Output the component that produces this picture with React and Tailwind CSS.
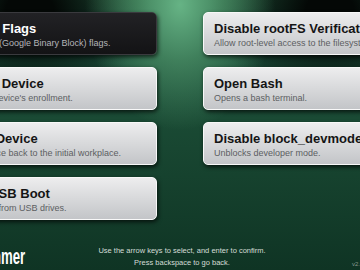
import React from "react";

const left = [
  {
    title: "Set GBB Flags",
    desc: "Sets GBB (Google Binary Block) flags.",
    active: true,
    t: "ml-[23px]",
    d: "ml-[34px]",
  },
  { title: "Deprovision Device", desc: "Removes the device's enrollment.", t: "ml-0", d: "ml-[15px]" },
  {
    title: "Reprovision Device",
    desc: "Brings the device back to the initial workplace.",
    t: "-ml-[6px]",
    d: "ml-[14px]",
  },
  { title: "Enable USB Boot", desc: "Allows booting from USB drives.", t: "ml-[20px]", d: "ml-[15px]" },
];

const right = [
  { title: "Disable rootFS Verification", desc: "Allow root-level access to the filesystem.", t: "ml-0", d: "ml-0" },
  { title: "Open Bash", desc: "Opens a bash terminal.", t: "ml-0", d: "ml-0" },
  { title: "Disable block_devmode", desc: "Unblocks developer mode.", t: "ml-0", d: "ml-0" },
];

function Card({ item }) {
  const base =
    "h-[43px] w-[245px] shrink-0 rounded-[5px] px-[10px] pt-[7px] overflow-hidden whitespace-nowrap shadow-[1px_2px_4px_rgba(0,0,0,0.7)]";
  if (item.active) {
    return (
      <div className={base + " bg-gradient-to-b from-[#222225] to-[#131315] border border-[#3a3a3e]"}>
        <div className={item.t + " text-[13px] font-bold leading-[17px] text-white"}>{item.title}</div>
        <div className={item.d + " text-[9px] leading-[12px] text-[#b4b4b8]"}>{item.desc}</div>
      </div>
    );
  }
  return (
    <div className={base + " bg-gradient-to-b from-[#ededee] to-[#c3c5c8] border border-[#f8f8f8]"}>
      <div className={item.t + " text-[13px] font-bold leading-[17px] text-[#151515]"}>{item.title}</div>
      <div className={item.d + " text-[9px] leading-[12px] text-[#5c5e62]"}>{item.desc}</div>
    </div>
  );
}

export default function App() {
  return (
    <div
      className="relative flex h-[270px] w-[360px] flex-col overflow-hidden bg-[radial-gradient(ellipse_95px_125px_at_180px_5px,#66b385_0%,rgba(84,156,110,0.65)_45%,transparent_100%),radial-gradient(ellipse_120px_90px_at_30px_10px,rgba(4,8,6,1)_20%,transparent),radial-gradient(ellipse_120px_90px_at_330px_10px,rgba(4,8,6,1)_20%,transparent),linear-gradient(to_bottom,#23593f,#18493a_10%,#1a4a34_45%,#0f3424)]"
      style={{ fontFamily: '"Liberation Sans", Arial, sans-serif' }}
    >
      <div className="flex justify-center gap-[46px] pt-[12px]">
        <div className="flex flex-col gap-[12px]">
          {left.map((item) => (
            <Card key={item.title} item={item} />
          ))}
        </div>
        <div className="flex flex-col gap-[12px]">
          {right.map((item) => (
            <Card key={item.title} item={item} />
          ))}
        </div>
      </div>

      <div className="mt-auto flex w-[536px] shrink-0 items-end self-center pb-[1px]">
        <div className="w-[150px] pl-[53px]">
          <div className="origin-left scale-x-[0.6] text-[22px] font-bold leading-[24px] text-white">Sh1mmer</div>
        </div>
        <div className="flex-1 pl-[4px] text-center text-[7.5px] leading-[12px] text-[#d4ddd7]">
          <div>Use the arrow keys to select, and enter to confirm.</div>
          <div>Press backspace to go back.</div>
        </div>
        <div className="w-[150px] pl-[54px] text-[6px] leading-[10px] text-[#8a9a90]">v2.0</div>
      </div>
    </div>
  );
}
